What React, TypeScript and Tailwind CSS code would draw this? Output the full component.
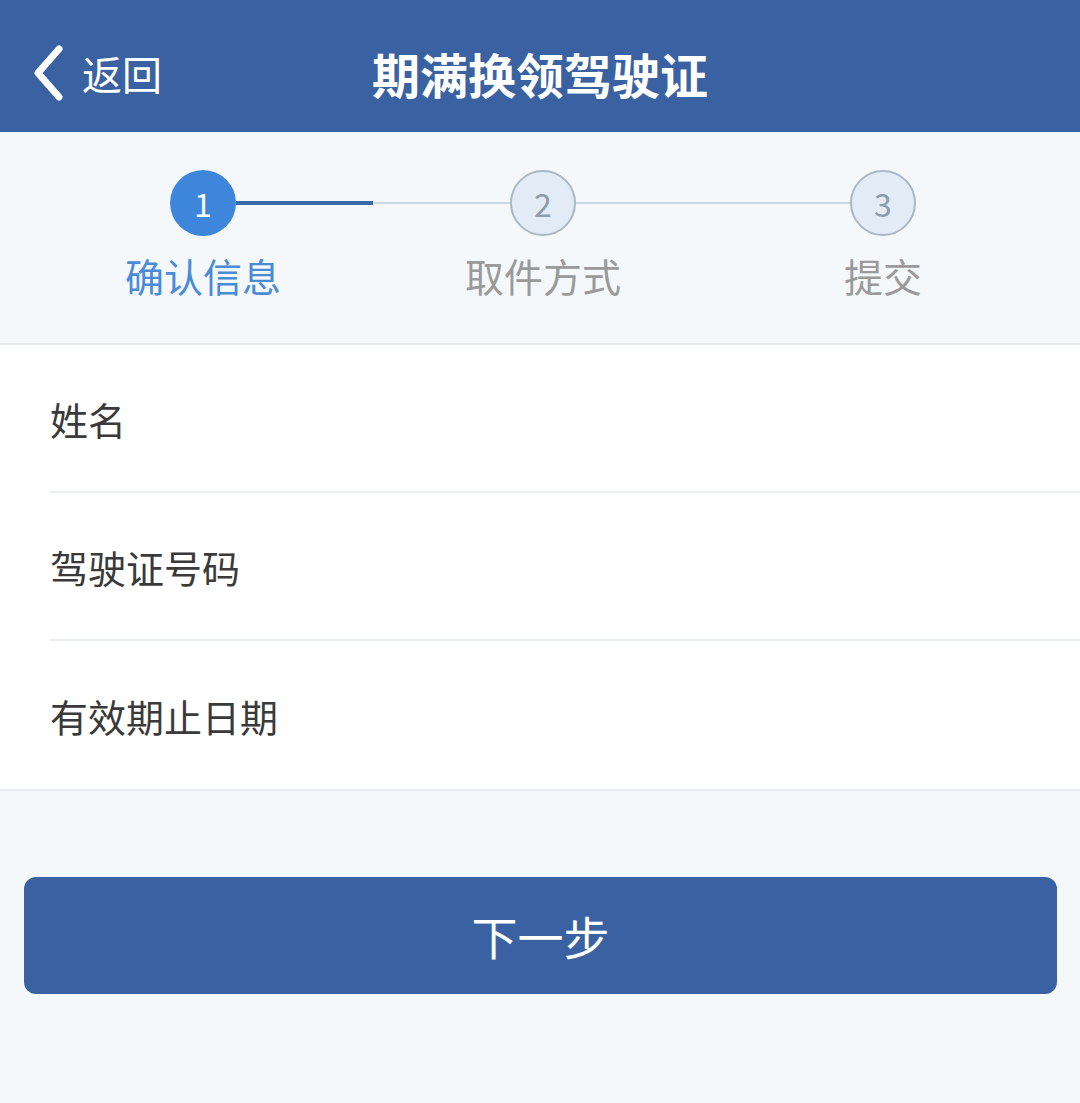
import React from 'react'

const font = { fontFamily: '"Noto Sans CJK SC", "Noto Sans", sans-serif' }

function StepCircle({ n, active }: { n: number; active?: boolean }) {
  return active ? (
    <div className="flex h-[66px] w-[66px] shrink-0 items-center justify-center rounded-full bg-[#3d86dc] text-[32px] leading-none text-white">
      {n}
    </div>
  ) : (
    <div className="flex h-[66px] w-[66px] shrink-0 items-center justify-center rounded-full border-2 border-[#aab8c6] bg-[#e3ecf6] text-[32px] leading-none text-[#8d9bab]">
      {n}
    </div>
  )
}

function Row({ label, last }: { label: string; last?: boolean }) {
  return (
    <div className="pl-[50px]">
      <div className={`flex h-[148px] items-center text-[38px] text-[#3a3a3a] ${last ? '' : 'border-b-2 border-[#eceff2]'}`}>
        {label}
      </div>
    </div>
  )
}

export default function App() {
  return (
    <div className="min-h-[1103px] w-[1080px] bg-[#f5f8fa]" style={font}>
      {/* header */}
      <header className="relative flex h-[132px] items-center bg-[#3a62a2] pt-[14px] text-white">
        <div className="flex items-center gap-[18px] pl-[32px]">
          <svg width="32" height="56" viewBox="0 0 32 56" fill="none">
            <path d="M27 4 L6 28 L27 52" stroke="white" strokeWidth="7" strokeLinecap="round" strokeLinejoin="round" />
          </svg>
          <span className="text-[40px] leading-none">返回</span>
        </div>
        <h1 className="absolute inset-x-0 text-center text-[48px] font-bold leading-none">期满换领驾驶证</h1>
      </header>

      {/* stepper */}
      <section className="border-b-2 border-[#e8ecef] pt-[38px] pb-[48px]">
        <div className="flex items-center pl-[170px] pr-[164px]">
          <StepCircle n={1} active />
          <div className="flex flex-1 items-center">
            <div className="h-[4px] flex-1 bg-[#3a6aaa]" />
            <div className="h-[2px] flex-1 bg-[#cdd7e2]" />
          </div>
          <StepCircle n={2} />
          <div className="h-[2px] flex-1 bg-[#cdd7e2]" />
          <StepCircle n={3} />
        </div>
        <div className="mt-[20px] flex items-center pl-[170px] pr-[164px] text-[39px] leading-none">
          <div className="flex w-[66px] justify-center whitespace-nowrap text-[#4a8bd6]">确认信息</div>
          <div className="flex-1" />
          <div className="flex w-[66px] justify-center whitespace-nowrap text-[#9a9a9a]">取件方式</div>
          <div className="flex-1" />
          <div className="flex w-[66px] justify-center whitespace-nowrap text-[#9a9a9a]">提交</div>
        </div>
      </section>

      {/* form */}
      <section className="border-b-2 border-[#e8ecef] bg-white">
        <Row label="姓名" />
        <Row label="驾驶证号码" />
        <Row label="有效期止日期" last />
      </section>

      {/* button */}
      <div className="pl-[24px] pr-[23px] pt-[86px]">
        <button className="flex h-[117px] w-full items-center justify-center rounded-[12px] bg-[#3a62a2] text-[46px] text-white">
          下一步
        </button>
      </div>
    </div>
  )
}
